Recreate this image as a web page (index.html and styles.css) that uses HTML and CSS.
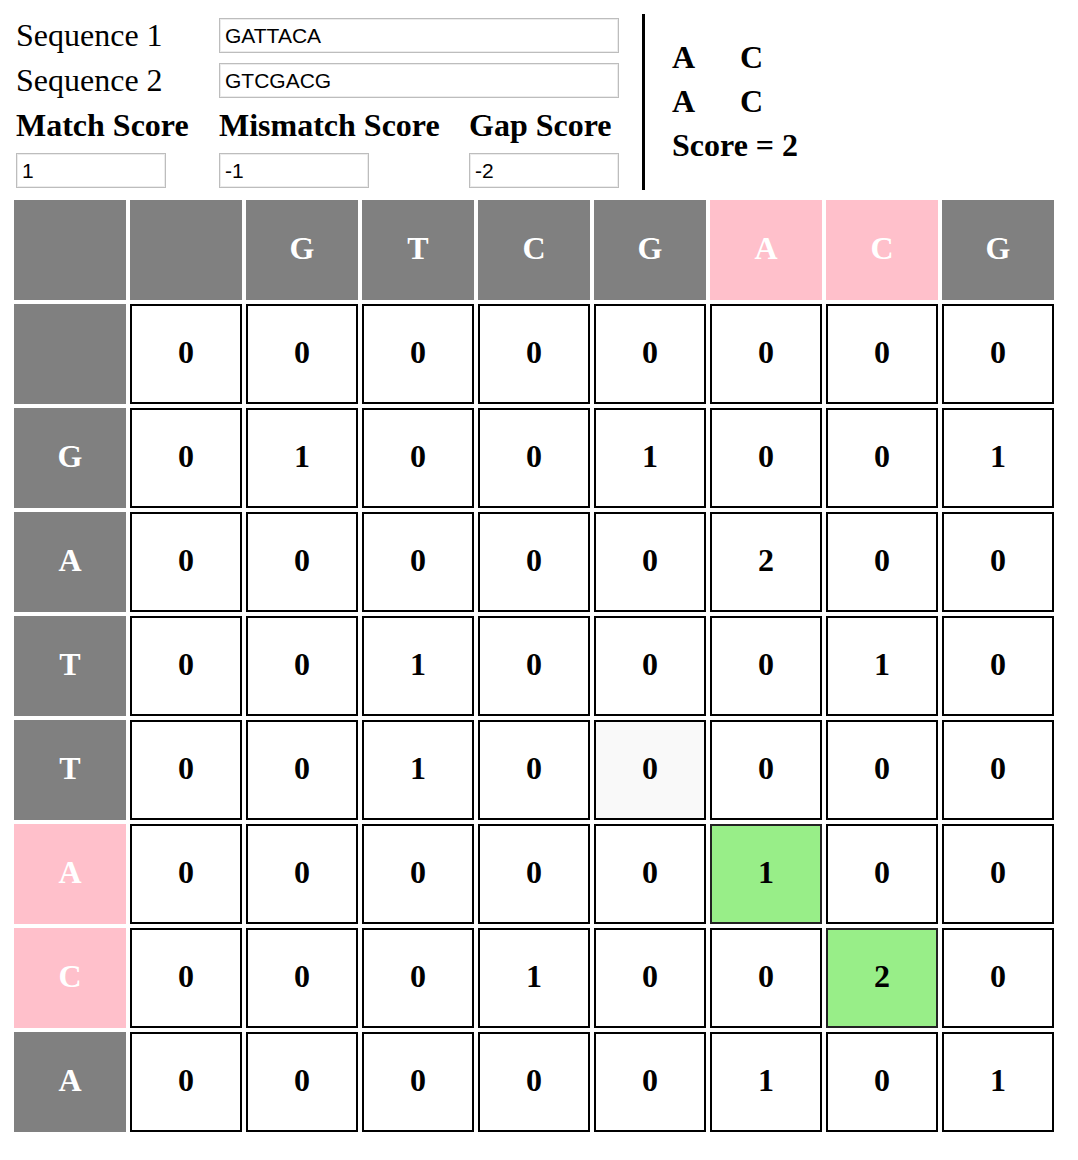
FILE: index.html
```html
<!DOCTYPE html>
<html lang="en">
<head>
    <meta charset="UTF-8">
    <title>Smith-Waterman</title>
    <link rel="stylesheet" href="styles.css">
</head>
<body>

    <div class="header">
        <!-- inputs -->
        <div class="form-grid">
            <label class="seq-label" for="seq1">Sequence 1</label>
            <input class="seq-input" type="text" id="seq1" value="GATTACA">

            <label class="seq-label" for="seq2">Sequence 2</label>
            <input class="seq-input" type="text" id="seq2" value="GTCGACG">

            <label class="score-label" for="match">Match Score</label>
            <label class="score-label" for="mismatch">Mismatch Score</label>
            <label class="score-label" for="gap">Gap Score</label>

            <input class="score-input" type="text" id="match" value="1">
            <input class="score-input" type="text" id="mismatch" value="-1">
            <input class="score-input" type="text" id="gap" value="-2">
        </div>

        <!-- result -->
        <div class="result">
            <div class="align-row"><span class="base">A</span><span class="base">C</span></div>
            <div class="align-row"><span class="base">A</span><span class="base">C</span></div>
            <div class="align-row">Score = 2</div>
        </div>
    </div>

    <table class="matrix">
        <tr>
            <td class="head"></td>
            <td class="head"></td>
            <td class="head">G</td>
            <td class="head">T</td>
            <td class="head">C</td>
            <td class="head">G</td>
            <td class="head picked">A</td>
            <td class="head picked">C</td>
            <td class="head">G</td>
        </tr>
        <tr>
            <td class="head"></td>
            <td>0</td><td>0</td><td>0</td><td>0</td><td>0</td><td>0</td><td>0</td><td>0</td>
        </tr>
        <tr>
            <td class="head">G</td>
            <td>0</td><td>1</td><td>0</td><td>0</td><td>1</td><td>0</td><td>0</td><td>1</td>
        </tr>
        <tr>
            <td class="head">A</td>
            <td>0</td><td>0</td><td>0</td><td>0</td><td>0</td><td>2</td><td>0</td><td>0</td>
        </tr>
        <tr>
            <td class="head">T</td>
            <td>0</td><td>0</td><td>1</td><td>0</td><td>0</td><td>0</td><td>1</td><td>0</td>
        </tr>
        <tr>
            <td class="head">T</td>
            <td>0</td><td>0</td><td>1</td><td>0</td><td class="hover">0</td><td>0</td><td>0</td><td>0</td>
        </tr>
        <tr>
            <td class="head picked">A</td>
            <td>0</td><td>0</td><td>0</td><td>0</td><td>0</td><td class="path">1</td><td>0</td><td>0</td>
        </tr>
        <tr>
            <td class="head picked">C</td>
            <td>0</td><td>0</td><td>0</td><td>1</td><td>0</td><td>0</td><td class="path">2</td><td>0</td>
        </tr>
        <tr>
            <td class="head">A</td>
            <td>0</td><td>0</td><td>0</td><td>0</td><td>0</td><td>1</td><td>0</td><td>1</td>
        </tr>
    </table>

</body>
</html>
```

FILE: styles.css
```css
body {
    margin: 0;
    font-family: "Liberation Serif", "Times New Roman", serif;
    color: #000;
    background: #fff;
}

.header {
    display: flex;
    padding: 13px 0 0 16px;
}

.form-grid {
    display: grid;
    grid-template-columns: 203px 250px 150px;
    grid-template-rows: repeat(4, 45px);
    align-items: center;
}

.seq-label {
    font-size: 32px;
}

.seq-input {
    grid-column: 2 / 4;
    width: 400px;
}

.score-label {
    font-size: 32px;
    font-weight: bold;
}

input {
    box-sizing: border-box;
    height: 35px;
    margin: 0;
    padding: 1px 5px 0;
    border: 1px solid #bdbdbd;
    box-shadow: inset 0 0 0 1px #ececec;
    font-family: "Liberation Sans", Arial, sans-serif;
    font-size: 21px;
    color: #000;
}

.score-input {
    width: 150px;
}

.result {
    margin: 1px 0 3px 23px;
    padding: 21px 0 0 27px;
    border-left: 3px solid #000;
    font-size: 32px;
    font-weight: bold;
    line-height: 44px;
}

.base {
    display: inline-block;
    width: 68px;
}

.matrix {
    margin: 3px 0 0 10px;
    border-spacing: 4px;
}

.matrix td {
    box-sizing: border-box;
    width: 112px;
    height: 100px;
    padding: 0 0 3px;
    border: 2px solid #000;
    background: #fff;
    text-align: center;
    font-size: 32px;
    font-weight: bold;
}

.matrix td.head {
    background: #808080;
    border-color: #808080;
    color: #fff;
}

.matrix td.picked {
    background: #ffc0cb;
    border-color: #ffc0cb;
}

.matrix td.path {
    background: #98ee88;
    border-color: #222;
}

.matrix td.hover {
    background: #f9f9f9;
}
```
